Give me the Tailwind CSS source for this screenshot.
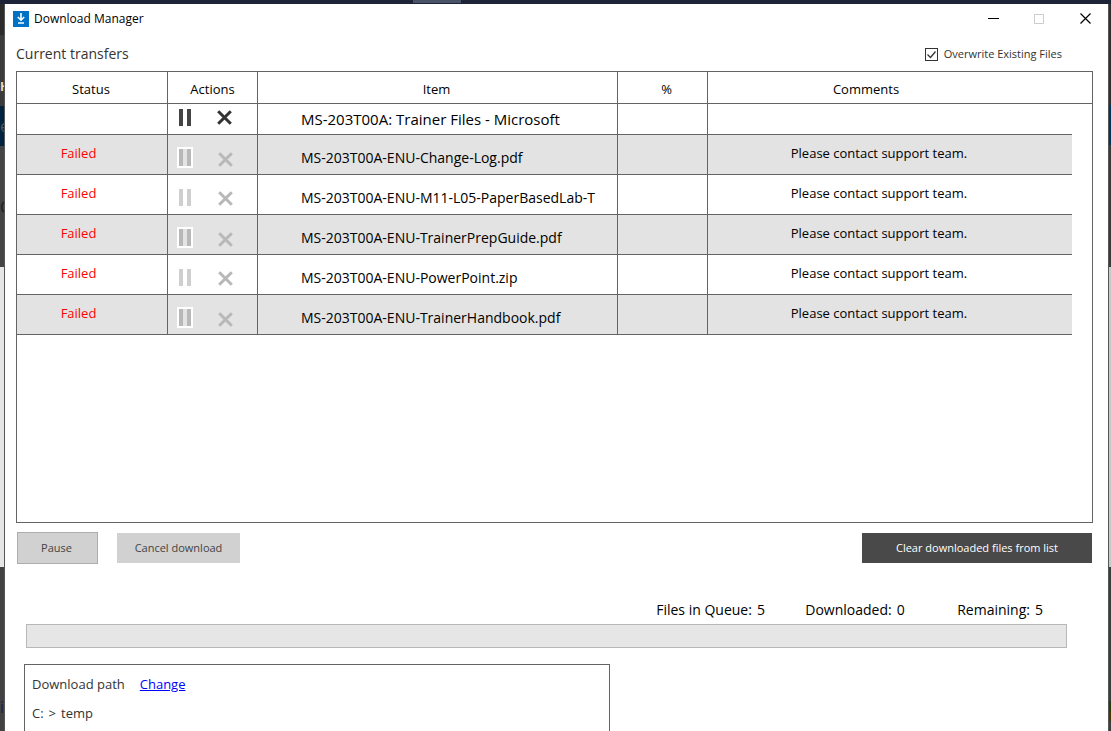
<!DOCTYPE html>
<html lang="en">
<head>
<meta charset="utf-8">
<meta name="viewport" content="width=device-width, initial-scale=1">
<title>Download Manager</title>
<script src="https://cdn.jsdelivr.net/npm/@tailwindcss/browser@4"></script>
</head>
<body class="flex h-screen flex-col overflow-hidden bg-[#444444] font-['Open_Sans','Noto_Sans',sans-serif] text-[13px] leading-5 text-black">
<svg class="hidden" aria-hidden="true">
  <symbol id="pause" viewBox="0 0 12 17"><path d="M0 0h4v17H0zM8 0h4v17H8z" fill="currentColor"/></symbol>
  <symbol id="cross" viewBox="0 0 15 15"><path d="M1.2 1.2l12.6 12.6M13.8 1.2L1.2 13.8" stroke="currentColor" stroke-width="3"/></symbol>
</svg>
<!-- Desktop behind the window -->
<div class="flex h-1 shrink-0 bg-[#1d2438]"><div class="ml-[413px] h-[3px] w-12 bg-[#4a5268]"></div></div>
<div class="flex min-h-0 flex-1">
  <div class="flex w-[5px] shrink-0 flex-col overflow-hidden border-r border-[#555555] text-[#1e1e1e]" aria-hidden="true">
    <div class="h-[31px] shrink-0 bg-[#2b2b2b]"></div>
    <div class="flex h-[71px] shrink-0 items-center bg-[#3b3b3b] pt-8 text-xs font-bold text-[#e8dcc0]">H</div>
    <div class="flex h-10 shrink-0 items-center bg-[#00233f] text-base text-[#555555]">e</div>
    <div class="h-[121px] shrink-0 bg-[#444444] pt-[51px] text-base leading-5">C</div>
    <div class="h-[300px] shrink-0 bg-[#e4e6e7]"></div>
    <div class="flex-1 bg-[#424242] pt-32 text-base text-[#1d2146]">i</div>
  </div>

  <main class="flex min-w-0 flex-1 flex-col overflow-hidden bg-white">
    <header class="flex h-[29px] shrink-0 items-center pl-2">
      <svg class="size-4" viewBox="0 0 16 16" aria-hidden="true"><path fill="#0072c6" d="M0 0h16v16H0z"/><path d="M8 2v7M4.800 6L8 9.200 11.200 6" fill="none" stroke="#fff" stroke-width="1.600"/><path d="M5 12h6" stroke="#fff" stroke-width="1.500"/></svg>
      <h1 class="ml-[5px] flex-1 text-xs">Download Manager</h1>
      <button class="flex h-full w-[46px] items-center justify-center" aria-label="Minimize"><svg class="size-[11px]" viewBox="0 0 11 11"><path d="M0 5.500h11" stroke="#000"/></svg></button>
      <button class="flex h-full w-[46px] items-center justify-center" aria-label="Maximize" disabled><svg class="size-[10px]" viewBox="0 0 10 10"><path d="M.5.5h9v9h-9z" fill="none" stroke="#ccc"/></svg></button>
      <button class="flex h-full w-[46px] items-center justify-center" aria-label="Close"><svg class="size-[11px]" viewBox="0 0 11 11"><path d="M.5.5l10 10M10.500.5l-10 10" stroke="#000" stroke-width="1.200"/></svg></button>
    </header>

    <div class="flex h-[38px] shrink-0 items-center justify-between pt-1 pr-[46px] pl-[11px] text-[#333333]">
      <h2 class="text-sm">Current transfers</h2>
      <label class="flex items-center gap-[6px] text-[11px] leading-5">
        <span class="grid">
          <input type="checkbox" checked class="col-start-1 row-start-1 size-[13px] appearance-none border border-[#333333] bg-white">
          <svg class="pointer-events-none col-start-1 row-start-1 size-[13px]" viewBox="0 0 13 13" aria-hidden="true"><path d="M2.500 6.500l3 3 5-6" fill="none" stroke="#333" stroke-width="1.300"/></svg>
        </span>
        Overwrite Existing Files
      </label>
    </div>

    <div class="mr-[15px] ml-[11px] min-h-[452px] shrink-0 border border-[#646464]">
      <table class="w-full table-fixed border-separate border-spacing-0">
        <colgroup><col class="w-[151px]"><col class="w-[90px]"><col class="w-[360px]"><col class="w-[90px]"><col><col class="w-5"></colgroup>
        <thead>
          <tr class="h-8 *:border-b *:border-[#646464] *:py-0 *:pt-[2px] *:font-normal">
            <th class="border-r border-r-[#333333] pr-[2px]">Status</th>
            <th class="border-r border-r-[#333333]">Actions</th>
            <th class="border-r border-r-[#333333] pr-[2px]">Item</th>
            <th class="border-r border-r-[#333333] pl-2">%</th>
            <th><span class="mr-12">Comments</span></th>
            <td></td>
          </tr>
        </thead>
        <tbody id="rows">
          <tr class="h-[31px] *:border-b *:border-[#646464] *:p-0">
            <td class="border-r border-r-[#333333]"></td>
            <td class="border-r border-r-[#333333]"><div class="flex items-center gap-[26px] pb-[3px] pl-[11px] text-[#444444]">
              <button aria-label="Pause all"><svg class="h-[17px] w-3"><use href="#pause"/></svg></button>
              <button class="text-[#333333]" aria-label="Cancel all"><svg class="size-[15px]"><use href="#cross"/></svg></button>
            </div></td>
            <td class="border-r border-r-[#333333]"><div class="pl-[43px] text-[15px]">MS-203T00A: Trainer Files - Microsoft</div></td>
            <td class="border-r border-r-[#333333]"></td>
            <td></td>
          </tr>
        </tbody>
      </table>
    </div>

    <template id="row">
      <tr class="group h-10 odd:bg-white even:bg-[#e3e3e3] *:border-b *:border-[#646464] *:p-0 *:align-top">
        <td class="border-r border-r-[#333333] text-center"><div class="pt-2 pr-[27px] text-[#ff0000]">Failed</div></td>
        <td class="border-r border-r-[#333333]"><div class="flex items-center gap-[25px] pt-3 pl-[9px] text-[#b8b8b8]">
          <button class="border-2 border-white group-odd:text-[#cfcfcf]" aria-label="Pause" disabled><svg class="h-[17px] w-3"><use href="#pause"/></svg></button>
          <button class="pt-1 group-odd:pt-[2px]" aria-label="Cancel" disabled><svg class="size-[15px]"><use href="#cross"/></svg></button>
        </div></td>
        <td class="border-r border-r-[#333333]"><div class="pt-[13px] pl-[43px] text-sm leading-5 whitespace-nowrap" data-name></div></td>
        <td class="border-r border-r-[#333333]"></td>
        <td class="text-center"><div class="pt-2 pr-[22px]">Please contact support team.</div></td>
        <td class="border-none! bg-white"></td>
      </tr>
    </template>

    <div class="flex shrink-0 items-center pt-[9px] pr-4 pl-3 text-[11px] text-[#444444]">
      <button class="h-8 w-[81px] border border-[#adadad] bg-[#d1d1d1] pr-[2px]">Pause</button>
      <button class="ml-[19px] h-[30px] w-[123px] bg-[#d1d1d1]">Cancel download</button>
      <button class="ml-auto h-[30px] w-[230px] bg-[#494949] text-white">Clear downloaded files from list</button>
    </div>

    <div class="mt-9 flex shrink-0 justify-end pr-[65px] text-sm leading-5">
      <p class="flex w-[149px] gap-[5px]">Files in Queue: <span>5</span></p>
      <p class="flex w-[152px] gap-[5px]">Downloaded: <span>0</span></p>
      <p class="flex gap-[5px]">Remaining: <span>5</span></p>
    </div>
    <div class="mt-1 mr-[41px] ml-[21px] flex shrink-0">
      <progress value="0" max="5" aria-label="Download progress" class="h-6 flex-1 appearance-none border border-[#b8b8b8] bg-[#e6e6e6] [&::-webkit-progress-bar]:bg-[#e6e6e6]"></progress>
    </div>

    <section class="mt-4 ml-[19px] w-[586px] flex-1 shrink-0 border border-b-0 border-[#646464] pt-[9px] pl-[7px] text-[#333333]">
      <p class="flex gap-[15px]">Download path <a href="#" class="text-[#0000ff] underline">Change</a></p>
      <p class="mt-[9px] flex gap-[5px]"><span>C:</span><span>&gt;</span><span>temp</span></p>
    </section>
  </main>

  <div class="flex w-[3px] shrink-0 flex-col border-l border-[#555555]" aria-hidden="true">
    <div class="h-[101px] shrink-0 bg-[#303030]"></div>
    <div class="h-10 shrink-0 bg-[#00355c]"></div>
    <div class="h-[122px] shrink-0 bg-[#3a3a3a]"></div>
    <div class="h-[300px] shrink-0 bg-[#c8caca]"></div>
    <div class="h-[134px] shrink-0 bg-[#3c3f3f]"></div>
    <div class="h-[10px] shrink-0 bg-[#2c3a10]"></div>
    <div class="h-[10px] shrink-0 bg-[#4a3600]"></div>
    <div class="flex-1 bg-[#3c3f3f]"></div>
  </div>
</div>
<script>
  const files = [
    'MS-203T00A-ENU-Change-Log.pdf',
    'MS-203T00A-ENU-M11-L05-PaperBasedLab-T',
    'MS-203T00A-ENU-TrainerPrepGuide.pdf',
    'MS-203T00A-ENU-PowerPoint.zip',
    'MS-203T00A-ENU-TrainerHandbook.pdf'
  ];
  for (const name of files) {
    const row = document.getElementById('row').content.cloneNode(true);
    row.querySelector('[data-name]').textContent = name;
    document.getElementById('rows').append(row);
  }
</script>
</body>
</html>
